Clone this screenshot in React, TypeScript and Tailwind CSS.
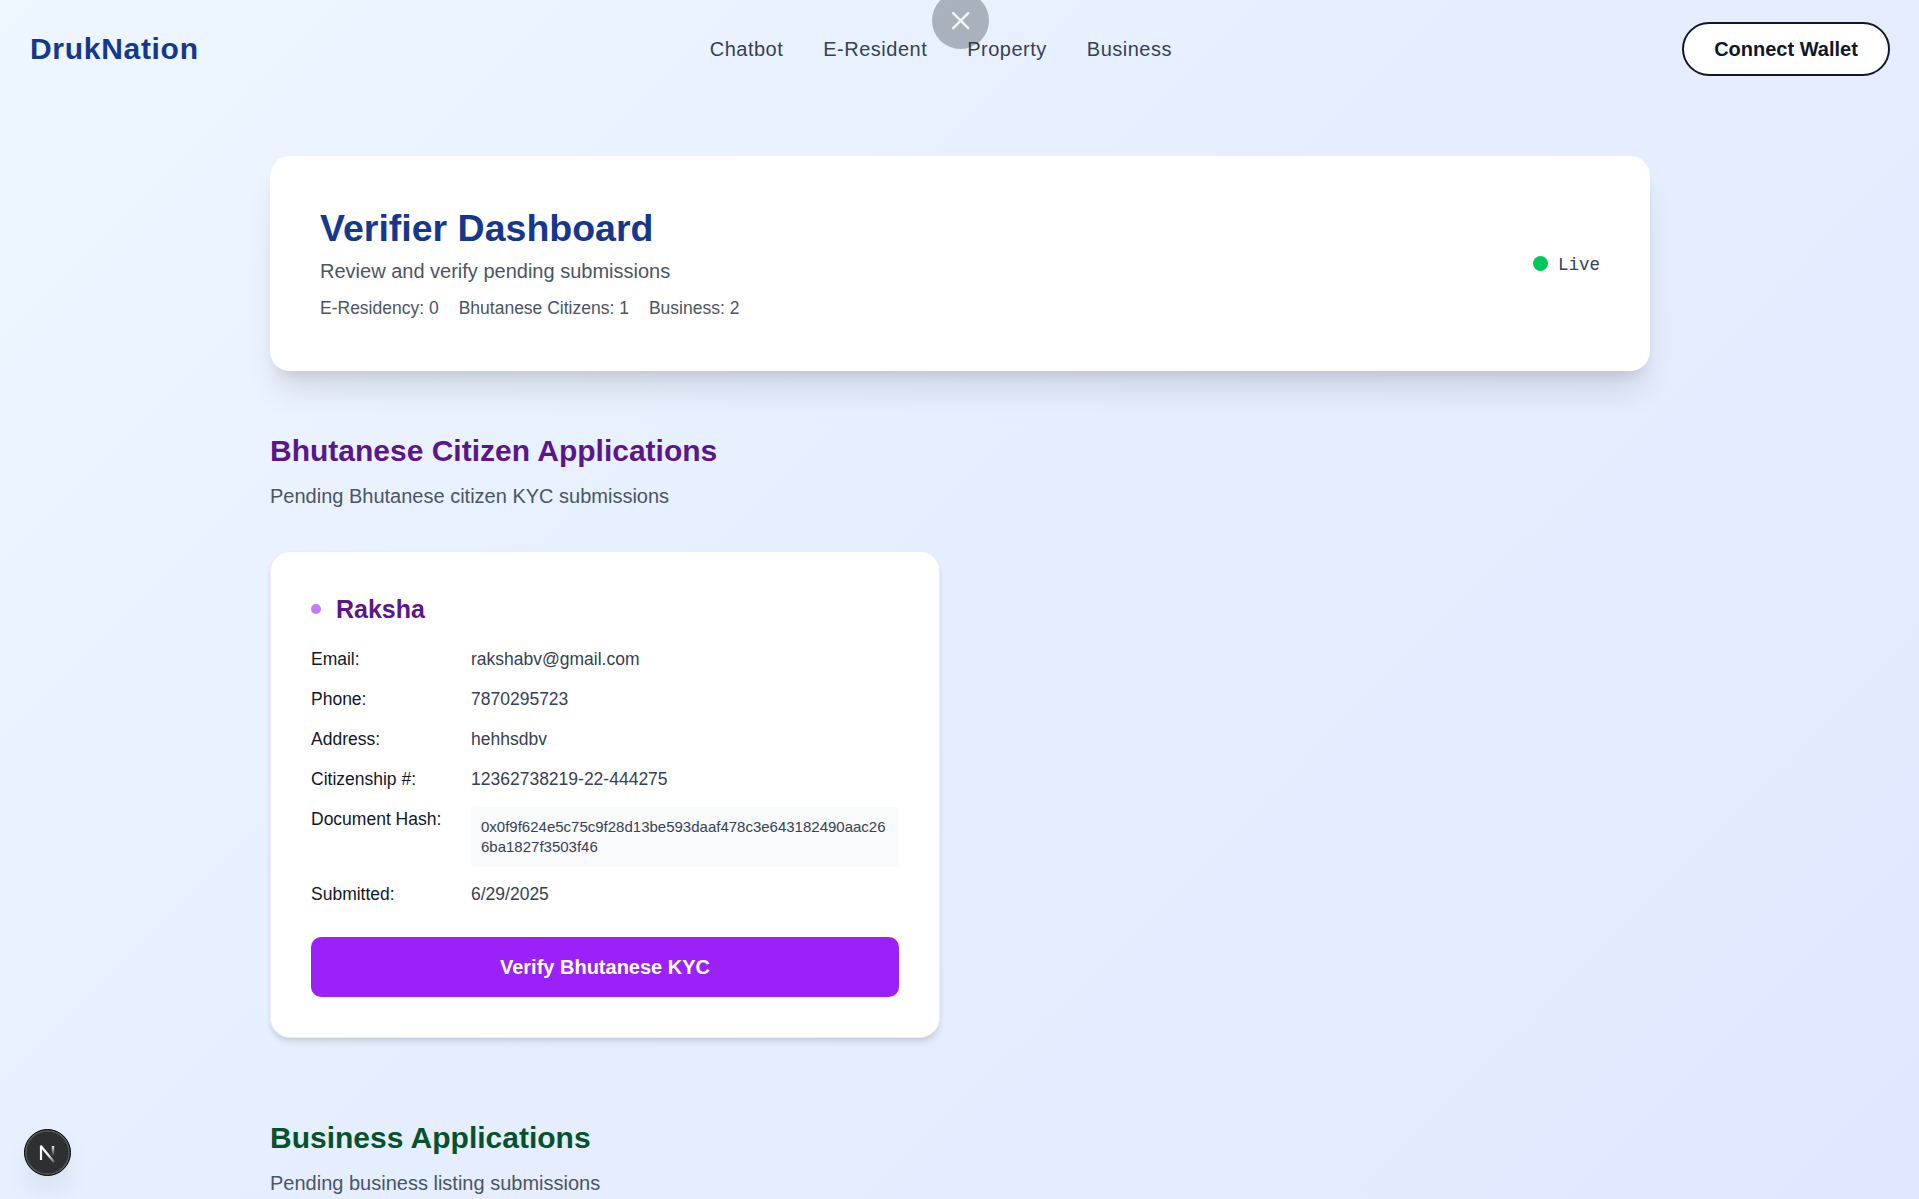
const navLinks = ["Chatbot", "E-Resident", "Property", "Business"];

const details = [
  ["Email:", "rakshabv@gmail.com"],
  ["Phone:", "7870295723"],
  ["Address:", "hehhsdbv"],
  ["Citizenship #:", "12362738219-22-444275"],
];

function Header() {
  return (
    <header className="flex h-[98px] items-center justify-between pr-[29px] pl-[30px]">
      <div className="text-[30px] leading-10 font-bold tracking-[0.7px] text-[#15388c]">DrukNation</div>
      <nav className="ml-px flex gap-10 text-[20px] leading-[30px] tracking-wide text-[#364153]">
        {navLinks.map((l) => (
          <a key={l} href="#">{l}</a>
        ))}
      </nav>
      <button className="h-[54px] w-[208px] rounded-full border-2 border-[#101828] bg-white text-[20px] leading-[30px] font-bold text-[#101828]">
        Connect Wallet
      </button>
    </header>
  );
}

function CloseBubble() {
  return (
    <div className="absolute top-[-8px] left-[932px] flex size-[57px] items-center justify-center rounded-full bg-[#2b3338]/33">
      <svg width="18" height="18" viewBox="0 0 18 18" stroke="#f3f6fb" strokeWidth="2.4" strokeLinecap="round">
        <path d="M1.2 1.2 16.2 16.2M16.2 1.2 1.2 16.2" />
      </svg>
    </div>
  );
}

function DevBadge() {
  return (
    <div className="absolute bottom-[23px] left-6 flex size-[47px] items-center justify-center rounded-full border border-black bg-[#2e2f32] shadow-[inset_0_0_0_1.5px_#5a5a5a,0_16px_32px_-8px_rgba(0,0,0,0.14)]">
      <svg width="17" height="20" viewBox="0 0 17 20" fill="none">
        <defs>
          <linearGradient id="diag" x1="9" y1="11" x2="15.5" y2="19" gradientUnits="userSpaceOnUse">
            <stop stopColor="#fff" />
            <stop offset="1" stopColor="#fff" stopOpacity="0.25" />
          </linearGradient>
          <linearGradient id="stem" x1="14" y1="2" x2="14" y2="13" gradientUnits="userSpaceOnUse">
            <stop stopColor="#fff" />
            <stop offset="1" stopColor="#fff" stopOpacity="0" />
          </linearGradient>
        </defs>
        <path d="M1.8 3 15 19" stroke="url(#diag)" strokeWidth="2.2" />
        <path d="M2 17V2.5" stroke="#fff" strokeWidth="2.2" />
        <path d="M14 3V13" stroke="url(#stem)" strokeWidth="2.4" />
      </svg>
    </div>
  );
}

export default function App() {
  return (
    <div className="relative h-[1199px] overflow-hidden bg-[linear-gradient(135deg,#eef6ff_0%,#e6effe_45%,#e1e8fe_100%)] font-['Liberation_Sans',Arial,sans-serif]">
      <Header />
      <main className="mt-[58px] ml-[270px] w-[1380px]">
        <section className="flex h-[215px] items-center justify-between rounded-[20px] bg-white px-[50px] shadow-[0_25px_31px_-6px_rgba(0,0,0,0.1),0_10px_12.5px_-7.5px_rgba(0,0,0,0.1)]">
          <div>
            <h1 className="text-[37.5px] leading-[45px] font-bold text-[#15388c]">Verifier Dashboard</h1>
            <p className="mt-[5px] text-[20px] leading-[30px] text-[#4a5565]">Review and verify pending submissions</p>
            <div className="mt-2.5 flex gap-5 text-[17.5px] leading-[25px] text-[#4a5565]">
              <span>E-Residency: 0</span>
              <span>Bhutanese Citizens: 1</span>
              <span>Business: 2</span>
            </div>
          </div>
          <div className="flex items-center gap-2.5">
            <span className="size-[15px] rounded-full bg-[#00c95a]" />
            <span className="pt-[3px] font-['Liberation_Mono',monospace] text-[17.5px] leading-[25px] text-[#364153]">Live</span>
          </div>
        </section>

        <section className="mt-[60px]">
          <h2 className="text-[30px] leading-10 font-bold text-[#5b168a]">Bhutanese Citizen Applications</h2>
          <p className="mt-2.5 text-[20px] leading-[30px] text-[#4a5565]">Pending Bhutanese citizen KYC submissions</p>
          <article className="mt-10 w-[670px] rounded-[20px] border border-[#f3e8ff] bg-white p-10 shadow-[0_5px_7.5px_-1px_rgba(0,0,0,0.1),0_2.5px_5px_-2.5px_rgba(0,0,0,0.1)]">
            <div className="flex items-center gap-[15px]">
              <span className="mb-px size-2.5 rounded-full bg-[#c27aff]" />
              <h3 className="text-[25px] leading-[35px] font-bold text-[#5b168a]">Raksha</h3>
            </div>
            <dl className="mt-5 grid grid-cols-[160px_1fr] gap-y-[15px] text-[17.5px] leading-[25px]">
              {details.map(([k, v]) => (
                <div key={k} className="contents">
                  <dt className="text-[#101828]">{k}</dt>
                  <dd className="text-[#364153]">{v}</dd>
                </div>
              ))}
              <dt className="text-[#101828]">Document Hash:</dt>
              <dd className="rounded-[5px] bg-[#f9fafb] p-2.5 text-[15px] leading-5 break-all text-[#364153]">
                0x0f9f624e5c75c9f28d13be593daaf478c3e643182490aac266ba1827f3503f46
              </dd>
              <dt className="text-[#101828]">Submitted:</dt>
              <dd className="text-[#364153]">6/29/2025</dd>
            </dl>
            <button className="mt-[30px] h-[60px] w-full rounded-[10px] bg-[#9c21f8] text-[20px] leading-[30px] font-bold text-white">
              Verify Bhutanese KYC
            </button>
          </article>
        </section>

        <section className="mt-20">
          <h2 className="text-[30px] leading-10 font-bold text-[#05522d]">Business Applications</h2>
          <p className="mt-2.5 text-[20px] leading-[30px] text-[#4a5565]">Pending business listing submissions</p>
        </section>
      </main>
      <CloseBubble />
      <DevBadge />
    </div>
  );
}
